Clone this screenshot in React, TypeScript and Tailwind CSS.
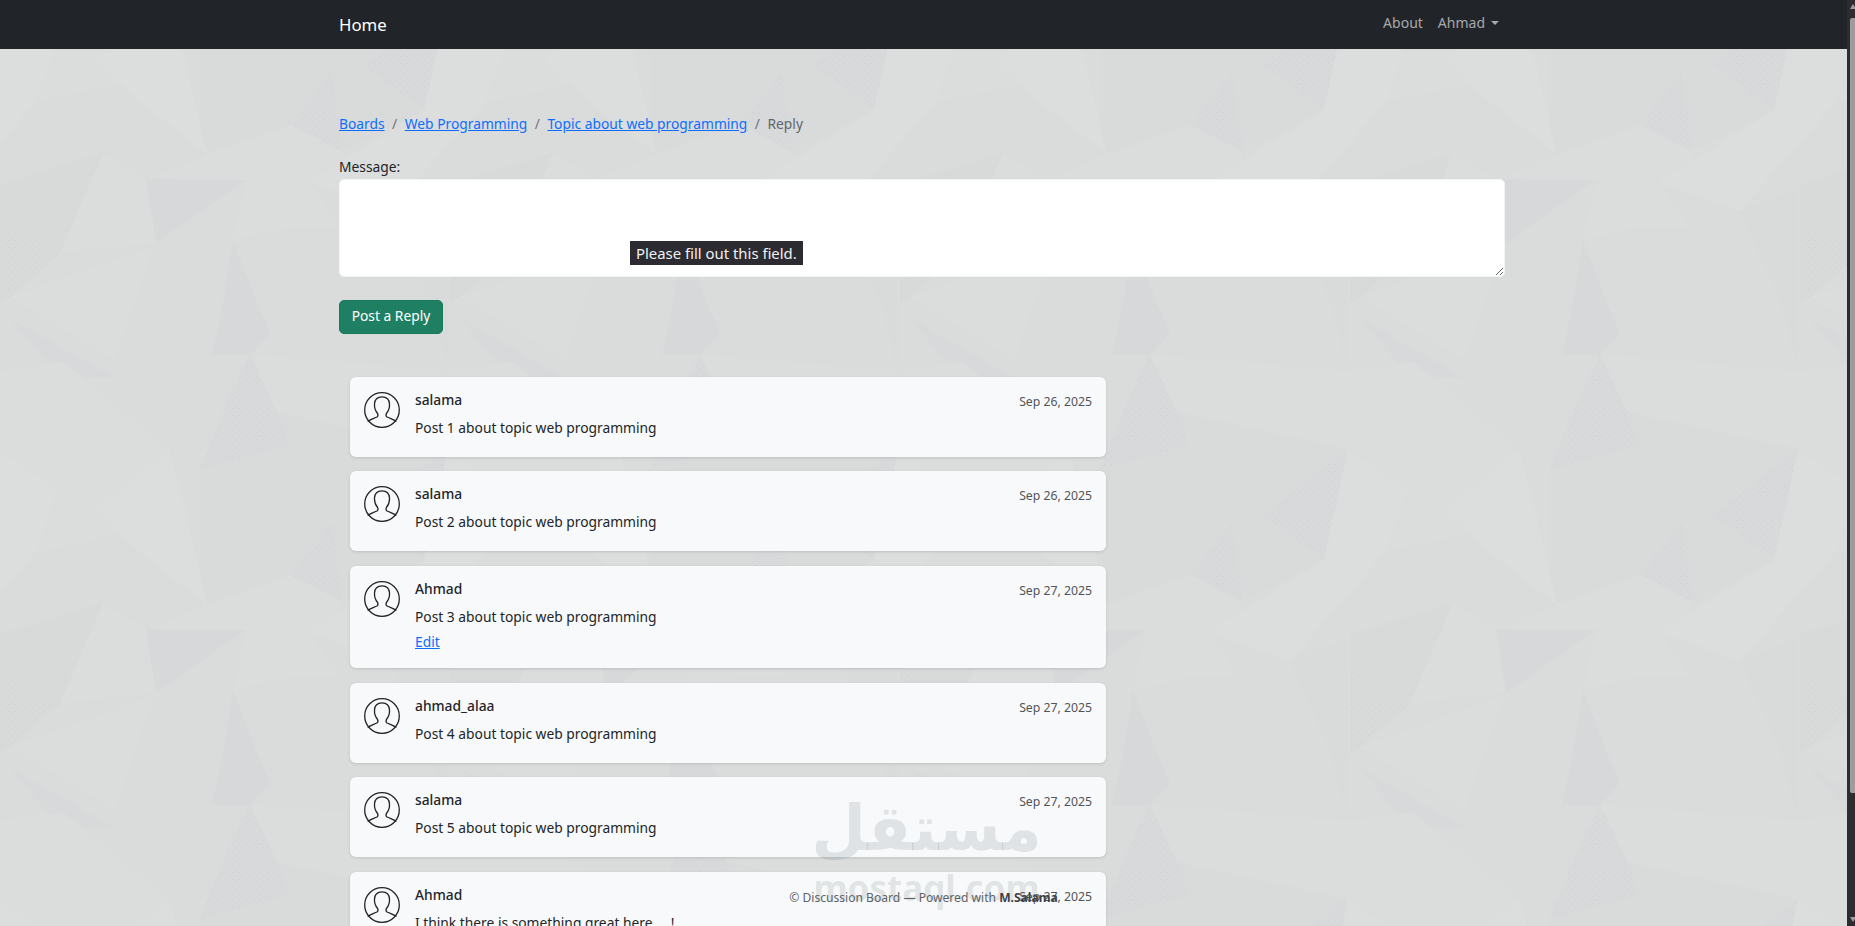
const posts = [
  { name: "salama", date: "Sep 26, 2025", text: "Post 1 about topic web programming" },
  { name: "salama", date: "Sep 26, 2025", text: "Post 2 about topic web programming" },
  { name: "Ahmad", date: "Sep 27, 2025", text: "Post 3 about topic web programming", edit: true },
  { name: "ahmad_alaa", date: "Sep 27, 2025", text: "Post 4 about topic web programming" },
  { name: "salama", date: "Sep 27, 2025", text: "Post 5 about topic web programming" },
  { name: "Ahmad", date: "Sep 27, 2025", text: "I think there is something great here ....!" },
];

// one 450px tile of the faceted wallpaper, screen coordinates
const facets: [string, string][] = [
  ["#d9dada", "277,412 448,449 424,560 342,601 291,575 200,605 200,469 289,445"],
  ["#d9dada", "390,211 448,188 448,370 431,303"],
  ["#d8d9d9", "103,153 -2,185 -2,304 10,297 60,253"],
  ["#d7d8da", "146,179 245,180 156,243"],
  ["#d7d8da", "233,240 257,303 270,333 250,355 212,355 223,303"],
  ["#d8d9da", "10,318 115,378 60,378"],
  ["#d8d9da", "250,354 277,412 289,445 200,469 228,400"],
  ["#d8d9da", "448,449 424,560 364,515"],
  ["#d8d9da", "332,523 342,601 291,575"],
  ["#dbdddc", "60,253 103,153 146,179 156,243"],
  ["#dbdddc", "10,297 155,245 115,360"],
  ["#dcdedd", "133,97 183,53 208,155"],
  ["#dbdddc", "208,155 293,123 343,153 340,180 245,180 146,179"],
  ["#dbdddc", "245,183 310,183 340,227 290,227 233,240"],
  ["#dbdddc", "250,354 448,371 513,362 619,449 640,520 486,552 508,490 448,449 277,412"],
  ["#dcdedd", "448,449 508,490 486,552 390,661 308,632 424,560"],
  ["#dcdedd", "619,449 657,605 583,546 545,510"],
];
const dotted = [
  "250,354 277,412 289,445 200,469 228,400",
  "448,449 424,560 364,515",
  "332,523 342,601 291,575",
  "0,220 60,253 10,297 0,300",
];

function Wallpaper() {
  return (
    <svg className="absolute inset-0 h-full w-full" aria-hidden="true">
      <defs>
        <pattern id="dots" width="7" height="7" patternUnits="userSpaceOnUse">
          <rect x="1" y="2" width="1" height="1" fill="#cfd0d5" />
          <rect x="4" y="5" width="1" height="1" fill="#d1d2d6" />
        </pattern>
        <g id="facets">
          {facets.map(([fill, points], i) => (
            <polygon key={i} fill={fill} points={points} />
          ))}
          {dotted.map((points, i) => (
            <polygon key={i} fill="url(#dots)" points={points} />
          ))}
        </g>
        <pattern id="tile" width="450" height="450" patternUnits="userSpaceOnUse">
          <rect width="450" height="450" fill="#dadcdb" />
          <use href="#facets" />
          <use href="#facets" x="-450" />
          <use href="#facets" y="-450" />
          <use href="#facets" x="-450" y="-450" />
        </pattern>
      </defs>
      <rect width="100%" height="100%" fill="url(#tile)" />
    </svg>
  );
}

function Avatar() {
  return (
    <svg width="36" height="36" viewBox="0 0 36 36" fill="none" stroke="#212529" strokeWidth="1.3" className="shrink-0">
      <circle cx="18" cy="18" r="17.3" />
      <path d="M3.6 29.6C6 27.5 10 26.5 13 25C14 24.3 14 22.5 13.6 21.5C11.5 19 10.3 15.5 10.5 12C10.7 7.5 13.5 4.8 18 4.8C22.5 4.8 25.3 7.5 25.5 12C25.7 15.5 24.5 19 22.4 21.5C22 22.5 22 24.3 23 25C26 26.5 30 27.5 32.4 29.6" />
    </svg>
  );
}

function PostCard({ post }: { post: (typeof posts)[number] }) {
  return (
    <div className="mb-[14.7px] flex gap-[15px] rounded-[6px] bg-[#f8f9fa] pt-[15px] pr-[14px] pb-[19px] pl-[14px] shadow-[0_1px_3px_rgba(0,0,0,0.12)]">
      <Avatar />
      <div className="min-w-0 flex-1 -mt-[3px]">
        <div className="flex items-start justify-between">
          <span className="text-[13.8px] leading-[21px] font-medium text-[#212529]">{post.name}</span>
          <span className="mt-[2px] text-[12.25px] leading-[21px] text-[#50555a]">{post.date}</span>
        </div>
        <p className="mt-[5px] text-[13.8px] leading-[21px] text-[#212529]">{post.text}</p>
        {post.edit && (
          <a href="#" className="mt-[4px] -mb-[3px] block text-[13.8px] leading-[21px] text-[#0d6efd] underline">
            Edit
          </a>
        )}
      </div>
    </div>
  );
}

export default function App() {
  return (
    <div className="flex h-screen w-screen overflow-hidden font-['Noto_Sans',sans-serif] text-[13.8px] leading-[21px] text-[#212529]">
      <div className="relative h-full min-w-0 flex-1 overflow-hidden">
        <Wallpaper />

        <div className="relative">
          <nav className="h-[49px] bg-[#212529]">
            <div className="ml-[339px] flex h-full w-[1166px] items-center justify-between">
              <a href="#" className="text-[16.8px] text-white">Home</a>
              <div className="mr-[6px] -mt-[4px] flex items-center gap-[15px] text-[14px] text-[#a6a8a9]">
                <a href="#">About</a>
                <a href="#" className="flex items-center gap-[6px]">
                  Ahmad
                  <span className="mt-[1px] h-0 w-0 border-x-[4px] border-t-[4px] border-x-transparent border-t-[#a6a8a9]" />
                </a>
              </div>
            </div>
          </nav>

          <main className="ml-[339px] w-[1166px] pt-[64px]">
            <ol className="flex items-center">
              <li><a href="#" className="text-[#0d6efd] underline">Boards</a></li>
              <li className="px-[7.5px] text-[#6c757d]">/</li>
              <li><a href="#" className="text-[#0d6efd] underline">Web Programming</a></li>
              <li className="px-[7.5px] text-[#6c757d]">/</li>
              <li><a href="#" className="text-[#0d6efd] underline">Topic about web programming</a></li>
              <li className="px-[7.5px] text-[#6c757d]">/</li>
              <li className="text-[#5f666c]">Reply</li>
            </ol>

            <form className="mt-[22px]">
              <label className="block pb-[2px]">Message:</label>
              <div className="relative">
                <textarea className="block h-[98px] w-full resize-y rounded-[5px] border border-[#f2f3f4] bg-white outline-none" />
                <div className="absolute top-[62px] left-[291px] bg-[#2b2b31] px-[6px] py-[1.5px] text-[14.9px] leading-[21px] text-[#f1f1f1]">
                  Please fill out this field.
                </div>
              </div>
              <button type="button" className="mt-[22.5px] block h-[34px] w-[104px] rounded-[5px] border border-[#1a7a5c] bg-[#1f7f63] pb-[2px] text-[13.8px] text-white">
                Post a Reply
              </button>
            </form>

            <section className="mt-[43px] ml-[11px] w-[756px]">
              {posts.map((post, i) => (
                <PostCard key={i} post={post} />
              ))}
            </section>
          </main>
        </div>

        {/* mostaql watermark */}
        <div className="pointer-events-none absolute top-[791px] left-[815px] flex w-[223px] flex-col items-center text-[#7e8a8f]/20">
          <span className="font-['DejaVu_Sans',sans-serif] text-[63px] leading-[76px] font-bold" dir="rtl">مستقل</span>
          <span className="font-['Noto_Sans',sans-serif] text-[35px] leading-[42px] font-bold">mostaql.com</span>
        </div>

        <footer className="absolute right-0 bottom-[19px] left-0 text-center text-[12.1px] leading-[18px] text-[#5c6368]">
          © Discussion Board — Powered with <strong className="font-bold text-[#3e4347]">M.Salama</strong>
        </footer>
      </div>

      {/* window scrollbar */}
      <div className="relative h-full w-[8px] shrink-0 bg-[#2c2c31]">
        <div className="absolute top-[4px] left-[3px] h-0 w-0 border-x-[3px] border-b-[5px] border-x-transparent border-b-[#9b9d9e]" />
        <div className="absolute top-[18px] right-0 h-[775px] w-[5px] rounded-l-[2px] bg-[#9b9d9e]" />
        <div className="absolute bottom-[4px] left-[3px] h-0 w-0 border-x-[3px] border-t-[5px] border-x-transparent border-t-[#9b9d9e]" />
      </div>
    </div>
  );
}
